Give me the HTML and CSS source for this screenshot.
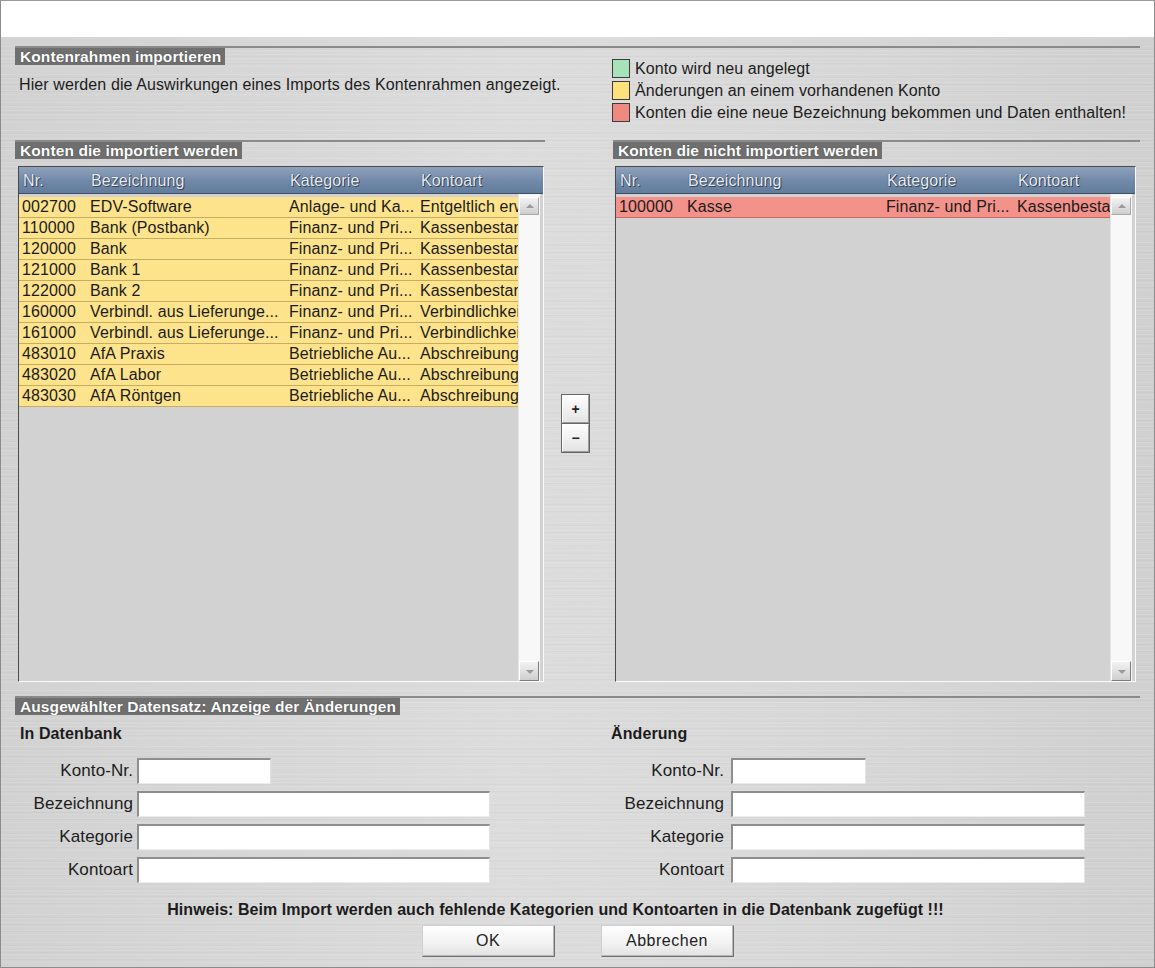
FILE: index.html
```html
<!DOCTYPE html>
<html lang="de">
<head>
    <meta charset="UTF-8">
    <title>Kontenrahmen importieren</title>
    <link rel="stylesheet" href="styles.css">
</head>
<body>
<div class="window">
    <div class="titlebar"></div>
    <div class="dialog">
        <div class="top">
            <div class="intro">
                <h2 class="caption"><span>Kontenrahmen importieren</span></h2>
                <p class="intro_text">Hier werden die Auswirkungen eines Imports des Kontenrahmen angezeigt.</p>
            </div>
            <ul class="legend">
                <li><span class="swatch new"></span>Konto wird neu angelegt</li>
                <li><span class="swatch changed"></span>Änderungen an einem vorhandenen Konto</li>
                <li><span class="swatch renamed"></span>Konten die eine neue Bezeichnung bekommen und Daten enthalten!</li>
            </ul>
        </div>

        <div class="lists">
            <div class="panel">
                <h2 class="caption line"><span>Konten die importiert werden</span></h2>
                <div class="table">
                    <div class="thead">
                        <span>Nr.</span><span>Bezeichnung</span><span>Kategorie</span><span>Kontoart</span>
                    </div>
                    <div class="tbody">
                        <div class="rows">
                            <div class="row changed"><span>002700</span><span>EDV-Software</span><span>Anlage- und Ka...</span><span>Entgeltlich erworbene Software</span></div>
                            <div class="row changed"><span>110000</span><span>Bank (Postbank)</span><span>Finanz- und Pri...</span><span>Kassenbestand</span></div>
                            <div class="row changed"><span>120000</span><span>Bank</span><span>Finanz- und Pri...</span><span>Kassenbestand</span></div>
                            <div class="row changed"><span>121000</span><span>Bank 1</span><span>Finanz- und Pri...</span><span>Kassenbestand</span></div>
                            <div class="row changed"><span>122000</span><span>Bank 2</span><span>Finanz- und Pri...</span><span>Kassenbestand</span></div>
                            <div class="row changed"><span>160000</span><span>Verbindl. aus Lieferunge...</span><span>Finanz- und Pri...</span><span>Verbindlichkeiten</span></div>
                            <div class="row changed"><span>161000</span><span>Verbindl. aus Lieferunge...</span><span>Finanz- und Pri...</span><span>Verbindlichkeiten</span></div>
                            <div class="row changed"><span>483010</span><span>AfA Praxis</span><span>Betriebliche Au...</span><span>Abschreibungen</span></div>
                            <div class="row changed"><span>483020</span><span>AfA Labor</span><span>Betriebliche Au...</span><span>Abschreibungen</span></div>
                            <div class="row changed"><span>483030</span><span>AfA Röntgen</span><span>Betriebliche Au...</span><span>Abschreibungen</span></div>
                        </div>
                        <div class="scrollbar">
                            <span class="arrow up"></span>
                            <span class="arrow down"></span>
                        </div>
                    </div>
                </div>
            </div>

            <div class="move">
                <button class="move_btn">+</button>
                <button class="move_btn">&minus;</button>
            </div>

            <div class="panel">
                <h2 class="caption line"><span>Konten die nicht importiert werden</span></h2>
                <div class="table">
                    <div class="thead">
                        <span>Nr.</span><span>Bezeichnung</span><span>Kategorie</span><span>Kontoart</span>
                    </div>
                    <div class="tbody">
                        <div class="rows">
                            <div class="row renamed"><span>100000</span><span>Kasse</span><span>Finanz- und Pri...</span><span>Kassenbestand</span></div>
                        </div>
                        <div class="scrollbar">
                            <span class="arrow up"></span>
                            <span class="arrow down"></span>
                        </div>
                    </div>
                </div>
            </div>
        </div>

        <h2 class="caption line"><span>Ausgewählter Datensatz: Anzeige der Änderungen</span></h2>
        <div class="details">
            <div class="record">
                <h3>In Datenbank</h3>
                <label>Konto-Nr.</label><input class="short" type="text">
                <label>Bezeichnung</label><input type="text">
                <label>Kategorie</label><input type="text">
                <label>Kontoart</label><input type="text">
            </div>
            <div class="record after">
                <h3>Änderung</h3>
                <label>Konto-Nr.</label><input class="short" type="text">
                <label>Bezeichnung</label><input type="text">
                <label>Kategorie</label><input type="text">
                <label>Kontoart</label><input type="text">
            </div>
        </div>

        <p class="hint">Hinweis: Beim Import werden auch fehlende Kategorien und Kontoarten in die Datenbank zugefügt !!!</p>
        <div class="actions">
            <button class="btn">OK</button>
            <button class="btn">Abbrechen</button>
        </div>
    </div>
</div>
</body>
</html>
```

FILE: styles.css
```css
html,body{margin:0; padding:0; background:#fff;}
body{font-family:"Liberation Sans", Arial, sans-serif; font-size:16px; letter-spacing:.1px; color:#1c1c1c;}
h2,h3,p,ul{margin:0; padding:0;}
ul{list-style:none;}
button{font-family:inherit; cursor:pointer;}

.window{
    width:1155px; height:968px; box-sizing:border-box;
    border:1px solid #8c8c8c; border-top-color:#9a9a9a;
    display:flex; flex-direction:column;
}
.titlebar{height:36px; background:#fff; flex:none;}
.dialog{
    flex:1; padding:9px 14px 0 14px;
    background-color:#d5d5d5;
    background-image:
        repeating-linear-gradient(0deg, rgba(255,255,255,.10) 0 1px, transparent 1px 4px),
        repeating-linear-gradient(0deg, rgba(0,0,0,.025) 0 1px, transparent 1px 7px),
        linear-gradient(90deg, #d2d2d2, #dcdcdc 45%, #d8d8d8 70%, #d0d0d0);
}

/* section captions */
.caption{font-size:15.5px; font-weight:bold; line-height:17px; height:17px; letter-spacing:.1px;}
.caption>span{
    display:inline-block; padding:0 4px 0 5px; background:#6f6f6f; color:#fff;
    text-shadow:0 0 1px #333;
}
.caption.line{border-top:2px solid #8a8a8a;}

/* top area */
.top{display:flex; border-top:2px solid #8a8a8a;}
.intro{width:597px;}
.intro_text{margin-top:11px; line-height:18px; padding-left:4px;}
.legend{margin-top:11px; display:flex; flex-direction:column; gap:3px;}
.legend>li{display:flex; align-items:center; gap:5px; height:19px; line-height:19px;}
.swatch{width:16px; height:17px; border:1px solid #3b3b3b;}
.swatch.new{background:#a6e3b9;}
.swatch.changed{background:#fde17d;}
.swatch.renamed{background:#f08a80;}

/* lists */
.lists{display:grid; grid-template-columns:530px 68px 527px; margin-top:18px;}
.panel>.caption{margin-bottom:7px;}
.table{
    height:516px; box-sizing:border-box; margin-left:3px;
    border:1px solid #4a4a4a; border-right-color:#fafafa; border-bottom-color:#fafafa;
    display:flex; flex-direction:column;
}
.panel:last-child .table{margin-left:2px; margin-right:4px;}
.panel:first-child .table{margin-right:1px;}
.thead{
    height:27px; flex:none; box-sizing:border-box; padding-top:1px;
    display:grid; grid-template-columns:68px 199px 131px 1fr; align-items:center;
    background:linear-gradient(#90a2bb, #7088a8 55%, #647c9c);
    border-bottom:1px solid #3e4d63;
    color:#e9edf3; text-shadow:0 0 1px #26303e, 1px 1px 0 #3a4658;
}
.thead>span{padding-left:4px;}
.tbody{flex:1; display:flex; background:#d2d2d2; padding-top:3px; min-height:0;}
.rows{flex:1; min-width:0;}
.row{
    height:21px; box-sizing:border-box; line-height:20px;
    display:grid; grid-template-columns:68px 199px 131px 1fr;
    border-bottom:1px solid #c7ad62; white-space:nowrap; overflow:hidden;
}
.row>span{padding-left:3px; overflow:hidden;}
.row.changed{background:#fde38b;}
.row.renamed{background:#f3928a; border-bottom-color:#c96a62;}

.scrollbar{
    width:21px; flex:none; margin:-3px 3px 0 0; background:#f8f8f8;
    border-left:1px solid #e6e6e6;
    display:flex; flex-direction:column; justify-content:space-between; padding:3px 0 0;
}
.arrow{
    height:18px; width:20px; box-sizing:border-box; position:relative;
    background:linear-gradient(#f2f2f2, #cfcfcf);
    border:1px solid #a9a9a9; border-top-color:#fff; border-left-color:#fff;
}
.arrow.down{height:20px; border-right-color:#7d7d7d; border-bottom-color:#7d7d7d;}
.arrow::after{
    content:""; position:absolute; left:6px; top:6px;
    border-left:4px solid transparent; border-right:4px solid transparent;
}
.arrow.up::after{border-bottom:4px solid #9a9a9a;}
.arrow.down::after{border-top:4px solid #9a9a9a; top:8px;}

.move{display:flex; flex-direction:column; justify-content:center; align-items:flex-start; padding:24px 0 0 17px;}
.move_btn{
    width:27px; height:28px; padding:0; margin:0;
    font-size:14px; font-weight:bold; color:#222; line-height:1;
    background:linear-gradient(#fdfdfd, #e4e4e4);
    border:1px solid #fff; border-right-color:#9a9a9a; border-bottom-color:#9a9a9a;
    outline:1px solid #666;
}
.move_btn+.move_btn{margin-top:1px;}

/* details */
.lists+.caption{margin-top:14px;}
.details{display:grid; grid-template-columns:591px 1fr;}
.record{
    display:grid; grid-template-columns:118px auto; column-gap:4px; row-gap:7px;
    align-items:center; justify-items:start;
}
.record.after{column-gap:7px;}
.record>h3{grid-column:1 / 3; font-size:16px; margin:10px 0 8px 5px; line-height:18px;}
.record>label{justify-self:end; font-size:17px;}
.record>input{
    width:353px; height:26px; box-sizing:border-box; margin:0; padding:0 4px;
    background:#fff; font:inherit;
    border:2px solid #8e8e8e; border-right:1px solid #e2e2e2; border-bottom:1px solid #ececec;
}
.record.after>input{width:354px;}
.record>input.short{width:134px;}
.record.after>input.short{width:135px;}

.hint{text-align:center; font-weight:bold; font-size:16px; letter-spacing:.05px; margin-top:18px; line-height:18px; padding-right:44px;}
.actions{display:flex; justify-content:center; gap:46px; margin-top:6px;}
.btn{
    width:133px; height:32px; font-size:16px; letter-spacing:.5px; color:#222;
    background:linear-gradient(#ffffff, #f1f1f1 60%, #e2e2e2);
    border:1px solid #cfcfcf; border-right-color:#6f6f6f; border-bottom-color:#6f6f6f;
    box-shadow:inset -1px -1px 0 #b8b8b8;
}
```
